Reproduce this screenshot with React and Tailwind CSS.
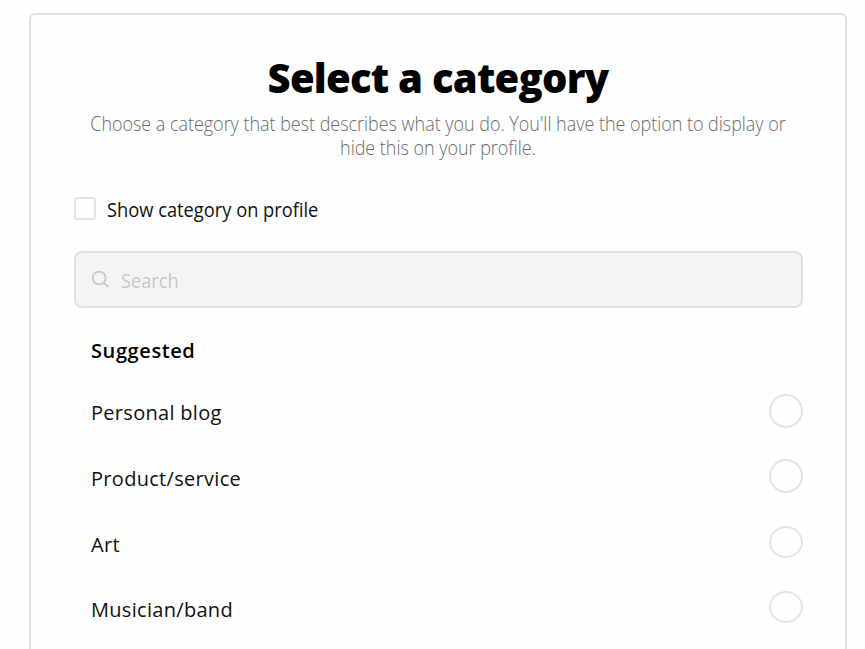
const categories = [
  { name: "Personal blog", row: "h-[65px]", text: "pt-[2px]", dot: "h-[34px]" },
  { name: "Product/service", row: "h-[67px]", text: "pt-[3px]", dot: "h-[34px]" },
  { name: "Art", row: "h-[65px]", text: "pt-[2px]", dot: "h-[32px]" },
  { name: "Musician/band", row: "h-[65px]", text: "pt-[2px]", dot: "h-[32px]" },
];

export default function App() {
  return (
    <div className="h-[649px] w-[865px] overflow-hidden bg-[#fefefe] pt-[13px] pl-[29px] font-['Open_Sans','Noto_Sans',sans-serif] text-[#111]">
      <main className="h-[700px] w-[818px] rounded-[6px] border-2 border-[#e0e0e0] px-[43px]">
        <h1 className="mt-[33px] h-[60px] text-center text-[40px] leading-[60px] font-extrabold tracking-[-0.75px] whitespace-nowrap text-black">
          Select a category
        </h1>
        <div className="mt-[4px] flex h-12 justify-center">
          <p className="w-[780px] shrink-0 scale-x-[0.896] text-center text-[20px] leading-6 font-light whitespace-nowrap text-[#6b6b6b]">
            Choose a category that best describes what you do. You'll have the option to display or
            <br />
            hide this on your profile.
          </p>
        </div>
        <label className="mt-[37px] flex h-[23px] items-center">
          <span className="h-[23px] w-[22px] rounded-[3px] border-2 border-[#e1e5ea]" />
          <span className="ml-[11px] origin-left scale-x-[0.914] pt-[2px] text-[20px] leading-6 whitespace-nowrap">Show category on profile</span>
        </label>
        <div className="mt-[31px] flex h-[57px] w-[729px] items-center rounded-[8px] border-2 border-[#e0e0e0] bg-[#f4f4f4] pl-[15px] text-[#c8c8c8]">
          <svg className="h-[19px] w-[19px]" viewBox="0 0 19 19" fill="none" stroke="currentColor" strokeWidth="1.8">
            <circle cx="8.2" cy="8" r="6.4" />
            <path d="M12.8 12.6 17.4 17" />
          </svg>
          <span className="ml-[11px] origin-left scale-x-[0.91] pt-[2px] text-[20px] leading-6">Search</span>
        </div>
        <section className="w-[729px] pl-[17px]">
          <h2 className="mt-[30px] h-[26px] text-[20px] leading-[26px] font-semibold tracking-[0.6px] whitespace-nowrap text-black">Suggested</h2>
          <ul className="mt-[30px] text-[20px] leading-[34px] tracking-[0.3px]">
            {categories.map((item) => (
              <li key={item.name} className={`flex items-start justify-between ${item.row}`}>
                <span className={`whitespace-nowrap ${item.text}`}>{item.name}</span>
                <span className={`w-[34px] shrink-0 rounded-[50%] border-2 border-[#e1e5ea] ${item.dot}`} />
              </li>
            ))}
          </ul>
        </section>
      </main>
    </div>
  );
}
